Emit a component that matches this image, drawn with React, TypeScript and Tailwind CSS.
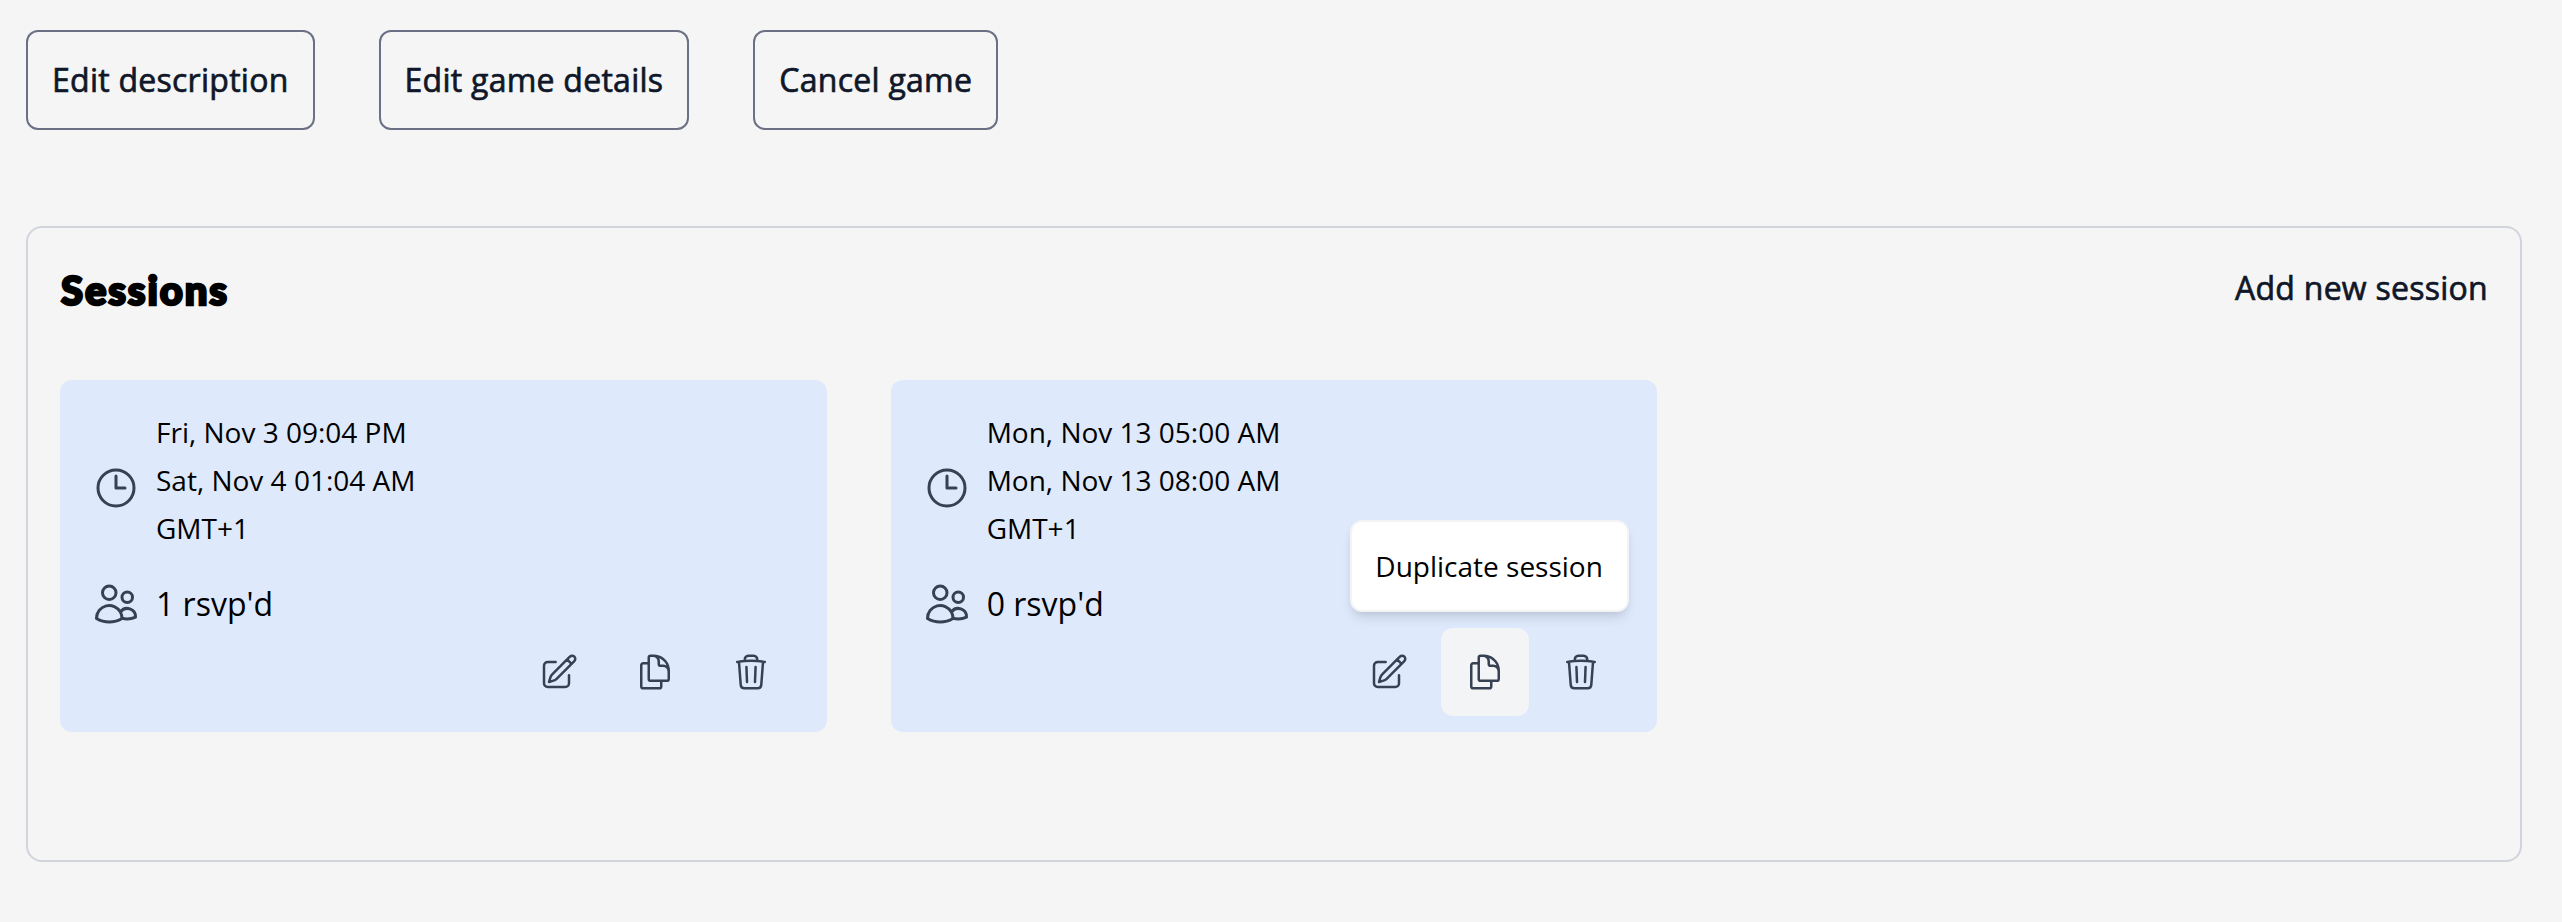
import type { ReactNode } from "react";
import {
  HiOutlineClock,
  HiOutlineDocumentDuplicate,
  HiOutlinePencilSquare,
  HiOutlineTrash,
  HiOutlineUsers,
} from "react-icons/hi2";

type Session = {
  start: string;
  end: string;
  zone: string;
  rsvps: number;
  duplicateHovered?: boolean;
};

const sessions: Session[] = [
  { start: "Fri, Nov 3 09:04 PM", end: "Sat, Nov 4 01:04 AM", zone: "GMT+1", rsvps: 1 },
  {
    start: "Mon, Nov 13 05:00 AM",
    end: "Mon, Nov 13 08:00 AM",
    zone: "GMT+1",
    rsvps: 0,
    duplicateHovered: true,
  },
];

function OutlineButton({ children }: { children: ReactNode }) {
  return (
    <button className="rounded-[12px] border-2 border-[#6b7085] p-6 text-[32px] leading-[48px] font-medium tracking-[0.26px] whitespace-nowrap text-[#101729] [-webkit-text-stroke:0.7px_#101729]">
      {children}
    </button>
  );
}

function IconButton({
  label,
  active,
  children,
}: {
  label: string;
  active?: boolean;
  children: ReactNode;
}) {
  return (
    <div className="relative">
      <button
        aria-label={label}
        className={`block rounded-[12px] p-6 text-[#364153] ${active ? "bg-[#f3f4f6]" : ""}`}
      >
        {children}
      </button>
      {active && (
        <div className="absolute bottom-[104px] left-[-91px] w-[279px] rounded-[12px] border-2 border-[#f3f4f6] bg-white py-5 pr-6 pl-[23px] text-[28px] leading-[48px] whitespace-nowrap text-black shadow-[0_8px_12px_-2px_rgba(0,0,0,0.1),0_4px_8px_-4px_rgba(0,0,0,0.1)]">
          {label}
        </div>
      )}
    </div>
  );
}

function SessionCard({ session }: { session: Session }) {
  return (
    <article className="flex h-[352px] flex-col rounded-[12px] bg-[#dee9fc] px-8 pt-7 pb-4 text-black">
      <div className="flex items-center gap-4">
        <HiOutlineClock className="mt-4 size-12 shrink-0 text-[#364153]" />
        <div className="text-[28px] leading-[48px]">
          <p>{session.start}</p>
          <p>{session.end}</p>
          <p>{session.zone}</p>
        </div>
      </div>
      <div className="mt-7 flex items-center gap-4">
        <HiOutlineUsers className="size-12 shrink-0 text-[#364153]" />
        <p className="text-[32px] leading-[48px]">{session.rsvps} rsvp'd</p>
      </div>
      <div className="flex justify-end gap-2">
        <IconButton label="Edit session">
          <HiOutlinePencilSquare className="size-10" />
        </IconButton>
        <IconButton label="Duplicate session" active={session.duplicateHovered}>
          <HiOutlineDocumentDuplicate className="size-10" />
        </IconButton>
        <IconButton label="Delete session">
          <HiOutlineTrash className="size-10" />
        </IconButton>
      </div>
    </article>
  );
}

export default function App() {
  return (
    <main className="h-[922px] w-[2562px] overflow-hidden bg-[#f5f5f5] pt-[30px] pr-10 pl-[26px] font-['Open_Sans','Noto_Sans',sans-serif]">
      <div className="flex gap-16">
        <OutlineButton>Edit description</OutlineButton>
        <OutlineButton>Edit game details</OutlineButton>
        <OutlineButton>Cancel game</OutlineButton>
      </div>
      <section className="mt-24 h-[636px] rounded-[16px] border-2 border-[#d1d5db] px-8 pt-8">
        <header className="flex h-[120px] items-start justify-between">
          <h2 className="pt-[6px] pl-px font-[Lato,sans-serif] text-[40px] leading-[48px] font-black tracking-[1.9px] text-black [-webkit-text-stroke:2.6px_#000]">
            Sessions
          </h2>
          <button className="pt-[4px] text-[32px] leading-[48px] font-medium tracking-[0.26px] text-[#101729] [-webkit-text-stroke:0.7px_#101729]">
            Add new session
          </button>
        </header>
        <div className="grid grid-cols-3 gap-16">
          {sessions.map((session) => (
            <SessionCard key={session.start} session={session} />
          ))}
        </div>
      </section>
    </main>
  );
}
